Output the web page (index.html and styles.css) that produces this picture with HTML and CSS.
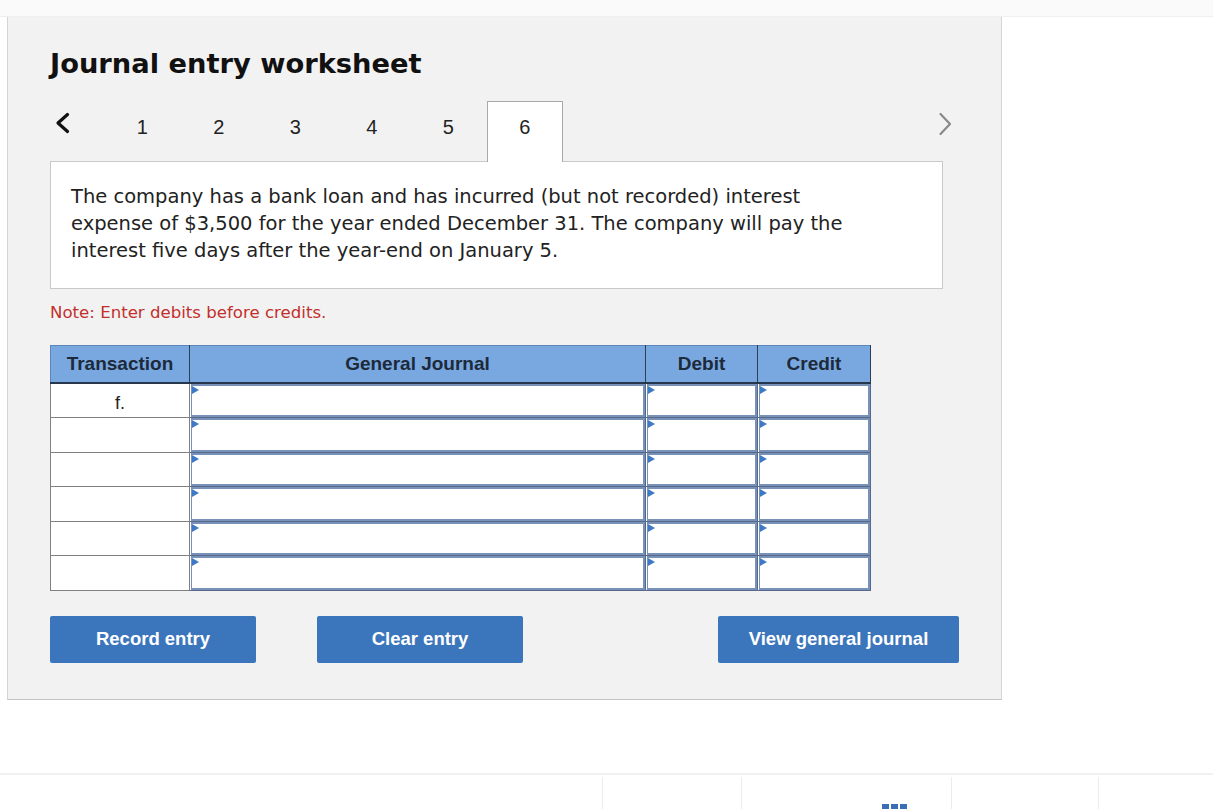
FILE: index.html
```html
<!DOCTYPE html>
<html lang="en">

<head>
    <meta charset="UTF-8">
    <link rel="stylesheet" href="styles.css">
    <title>Journal entry worksheet</title>
</head>

<body>
    <div class="top-strip"></div>

    <div class="worksheet">
        <h1>Journal entry worksheet</h1>

        <div class="tabs">
            <button class="nav prev" aria-label="Previous">
                <svg width="17" height="22" viewBox="0 0 17 22">
                    <path d="M13.5 2.5 L4 11 L13.5 19.5" fill="none" stroke="#111" stroke-width="3.2" stroke-linecap="round" stroke-linejoin="round" />
                </svg>
            </button>
            <div class="tab">1</div>
            <div class="tab">2</div>
            <div class="tab">3</div>
            <div class="tab">4</div>
            <div class="tab">5</div>
            <div class="tab active">6</div>
            <button class="nav next" aria-label="Next">
                <svg width="15" height="24" viewBox="0 0 15 24">
                    <path d="M2.5 2 L12 12 L2.5 22" fill="none" stroke="#8a8a8a" stroke-width="2.2" stroke-linecap="round" stroke-linejoin="round" />
                </svg>
            </button>
        </div>

        <div class="question">
            The company has a bank loan and has incurred (but not recorded) interest
            expense of $3,500 for the year ended December 31. The company will pay the
            interest five days after the year-end on January 5.
        </div>

        <p class="note">Note: Enter debits before credits.</p>

        <table class="journal">
            <thead>
                <tr>
                    <th class="j-trans">Transaction</th>
                    <th class="j-account">General Journal</th>
                    <th class="j-debit">Debit</th>
                    <th class="j-credit">Credit</th>
                </tr>
            </thead>
            <tbody id="rows">
                <tr>
                    <td class="j-trans">f.</td>
                    <td class="entry"><div class="field"></div></td>
                    <td class="entry"><div class="field"></div></td>
                    <td class="entry"><div class="field"></div></td>
                </tr>
                <tr>
                    <td class="j-trans"></td>
                    <td class="entry"><div class="field"></div></td>
                    <td class="entry"><div class="field"></div></td>
                    <td class="entry"><div class="field"></div></td>
                </tr>
                <tr>
                    <td class="j-trans"></td>
                    <td class="entry"><div class="field"></div></td>
                    <td class="entry"><div class="field"></div></td>
                    <td class="entry"><div class="field"></div></td>
                </tr>
                <tr>
                    <td class="j-trans"></td>
                    <td class="entry"><div class="field"></div></td>
                    <td class="entry"><div class="field"></div></td>
                    <td class="entry"><div class="field"></div></td>
                </tr>
                <tr>
                    <td class="j-trans"></td>
                    <td class="entry"><div class="field"></div></td>
                    <td class="entry"><div class="field"></div></td>
                    <td class="entry"><div class="field"></div></td>
                </tr>
                <tr>
                    <td class="j-trans"></td>
                    <td class="entry"><div class="field"></div></td>
                    <td class="entry"><div class="field"></div></td>
                    <td class="entry"><div class="field"></div></td>
                </tr>
            </tbody>
        </table>

        <div class="actions">
            <button class="btn">Record entry</button>
            <button class="btn">Clear entry</button>
            <button class="btn btn-wide">View general journal</button>
        </div>
    </div>

    <div class="footer">
        <div class="f-cell f-first"></div>
        <div class="f-cell f-a"></div>
        <div class="f-cell f-b">
            <div class="grid-icon">
                <span></span><span></span><span></span>
                <span></span><span></span><span></span>
                <span></span><span></span><span></span>
            </div>
        </div>
        <div class="f-cell f-c"></div>
        <div class="f-cell f-d"></div>
    </div>
</body>

</html>
```

FILE: styles.css
```css
body {
    margin: 0;
    background-color: #ffffff;
    color: #111;
    font-family: "DejaVu Sans", Verdana, sans-serif;
    overflow: hidden;
}

.top-strip {
    height: 16px;
    background-color: #fafafa;
    border-bottom: 1px solid #efefef;
}

.worksheet {
    box-sizing: border-box;
    width: 995px;
    margin-left: 7px;
    padding: 31px 42px 36px;
    background-color: #f2f2f2;
    border: 1px solid #d4d4d4;
    border-top: none;
    border-bottom-color: #c4c4c4;
}

h1 {
    margin: 0;
    font-size: 27.3px;
    line-height: 32px;
    font-weight: bold;
}

/* tabs */

.tabs {
    display: flex;
    height: 61px;
    margin-top: 21px;
}

.nav {
    background: none;
    border: none;
    padding: 0;
    cursor: pointer;
    display: flex;
    align-items: flex-start;
}

.prev {
    width: 54px;
    padding-top: 11px;
    padding-left: 4px;
}

.next {
    margin-left: auto;
    padding-top: 11px;
    padding-right: 6px;
}

.tab {
    box-sizing: border-box;
    width: 76.5px;
    padding-top: 13px;
    border: 1px solid transparent;
    border-bottom: none;
    text-align: center;
    font-family: "Liberation Sans", Arial, sans-serif;
    font-size: 20px;
    line-height: 24px;
    color: #222;
}

.tab.active {
    position: relative;
    z-index: 1;
    background-color: #ffffff;
    border-color: #a9a9a9;
}

.question {
    box-sizing: border-box;
    width: 893px;
    height: 128px;
    margin-top: -1px;
    padding: 21px 60px 0 20px;
    background-color: #ffffff;
    border: 1px solid #c9c9c9;
    font-size: 19.5px;
    line-height: 27px;
    color: #222;
}

.note {
    margin: 13.5px 0 0;
    font-size: 16.6px;
    line-height: 20px;
    color: #c2302c;
}

/* journal table */

.journal {
    margin-top: 22.5px;
    border-collapse: collapse;
    font-family: "Liberation Sans", Arial, sans-serif;
}

.journal th {
    height: 37px;
    padding: 0;
    box-sizing: border-box;
    background-color: #79a8e1;
    color: #1d2a3a;
    font-size: 19px;
    font-weight: bold;
    border-top: 1px solid #5e86b8;
    border-left: 1px solid #2c3f57;
    border-right: 1px solid #2c3f57;
    border-bottom: 2px solid #26364b;
}

.journal th.j-trans {
    border-left-color: #5e86b8;
}

.j-trans {
    width: 139px;
}

.j-account {
    width: 456px;
}

.j-debit {
    width: 112px;
}

.j-credit {
    width: 113px;
}

.journal td {
    height: 34.5px;
    padding: 0;
    box-sizing: border-box;
    background-color: #ffffff;
}

.journal td.j-trans {
    border: 1px solid #808080;
    vertical-align: top;
    padding-top: 9px;
    font-size: 18px;
    line-height: 20px;
    color: #222;
    text-align: center;
}

.journal td.entry {
    border: 1px solid #56698a;
    padding: 0 0 0 1px;
}

.field {
    position: relative;
    box-sizing: border-box;
    height: 33.5px;
    border: 2px solid #7791b9;
    border-left-width: 1px;
    background-color: #ffffff;
}

.field::before {
    content: "";
    position: absolute;
    top: 0;
    left: 0;
    border-left: 7px solid #3d79c4;
    border-top: 4.5px solid transparent;
    border-bottom: 4.5px solid transparent;
}

/* buttons */

.actions {
    display: flex;
    margin-top: 25px;
    gap: 61px;
}

.btn {
    width: 206px;
    height: 47px;
    border: none;
    border-radius: 2px;
    background-color: #3b76bc;
    color: #ffffff;
    font-family: "Liberation Sans", Arial, sans-serif;
    font-size: 18.5px;
    font-weight: bold;
    cursor: pointer;
}

.btn-wide {
    width: 241px;
    margin-left: auto;
}

/* footer */

.footer {
    display: flex;
    margin-top: 73px;
    border-top: 2px solid #f1f1f1;
    padding-top: 2px;
}

.f-cell {
    height: 40px;
    border-left: 1px solid #ececec;
}

.f-first {
    width: 602px;
    border-left: none;
}

.f-a {
    width: 138px;
}

.f-b {
    width: 210px;
    display: flex;
    justify-content: flex-end;
    padding-right: 44px;
    box-sizing: border-box;
}

.f-c {
    width: 146px;
}

.f-d {
    flex: 1;
}

.grid-icon {
    display: grid;
    grid-template-columns: repeat(3, 7px);
    gap: 2px;
    margin-top: 27px;
}

.grid-icon span {
    height: 7px;
    background-color: #3a6fb5;
}
```
